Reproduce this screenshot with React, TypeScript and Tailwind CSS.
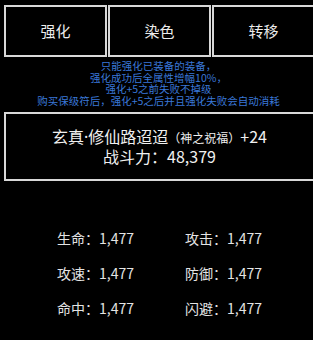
const tabs = ["强化", "染色", "转移"];

const notes = [
  "只能强化已装备的装备，",
  "强化成功后全属性增幅10%，",
  "强化+5之前失败不掉级",
  "购买保级符后，强化+5之后并且强化失败会自动消耗",
];

const stats = [
  ["生命", "1,477", "攻击", "1,477"],
  ["攻速", "1,477", "防御", "1,477"],
  ["命中", "1,477", "闪避", "1,477"],
];

export default function App() {
  return (
    <div
      className="w-[313px] h-[340px] overflow-hidden bg-black text-[#ececec]"
      style={{ fontFamily: '"Noto Sans CJK SC", "Noto Sans", sans-serif' }}
    >
      <div className="w-[330px] pl-1 pt-[5px]">
        {/* Tabs */}
        <div className="flex gap-[1px]">
          {tabs.map((t) => (
            <div
              key={t}
              className="w-[103px] h-[52px] border-2 border-[#d8d8d8] flex items-center justify-center text-[15px]"
            >
              {t}
            </div>
          ))}
        </div>

        {/* Notes */}
        <div className="w-[309px] mt-[3px] text-center text-[10.5px] leading-[11.7px] text-[#3a78d8]">
          {notes.map((n) => (
            <p key={n} className="whitespace-nowrap">
              {n}
            </p>
          ))}
        </div>

        {/* Equipment */}
        <div className="w-[311px] h-[69px] mt-[5px] border-2 border-[#d8d8d8] flex flex-col items-center justify-center text-[16px] leading-[18px] text-[#f0f0f0]">
          <div className="whitespace-nowrap">
            玄真<span style={{ fontFamily: '"Noto Sans", sans-serif' }}>·</span>修仙路迢迢
            <span className="text-[12px]">（神之祝福）</span>+24
          </div>
          <div>战斗力：48,379</div>
        </div>
      </div>

      {/* Stats */}
      <div className="mt-[40px] pl-[57px] text-[14px] text-[#e4e4e4]">
        {stats.map((r) => (
          <div key={r[0]} className="h-[35px] flex items-center">
            <div className="w-[128px]">
              {r[0]}：{r[1]}
            </div>
            <div>
              {r[2]}：{r[3]}
            </div>
          </div>
        ))}
      </div>
    </div>
  );
}
